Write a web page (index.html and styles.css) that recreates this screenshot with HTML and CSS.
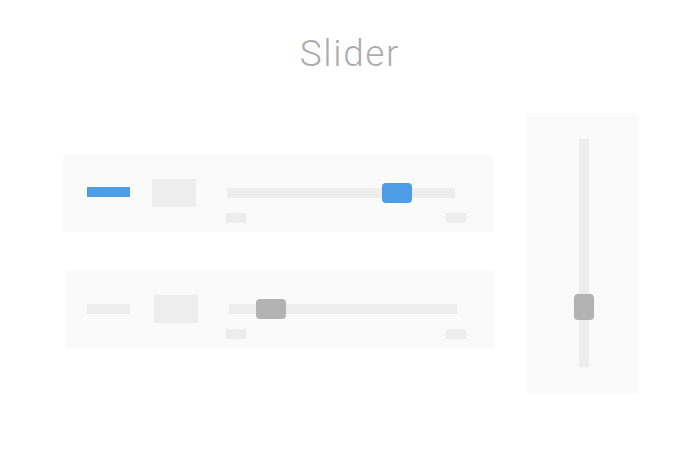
FILE: index.html
```
<!DOCTYPE html>
<html lang="en">
<head>
    <meta charset="UTF-8">
    <meta name="viewport" content="width=device-width, initial-scale=1.0">
    <title>Slider</title>
    <link rel="stylesheet" href="styles.css">
</head>
<body>
    <h1>Slider</h1>

    <div class="stage">
        <div class="rows">
            <!-- Active horizontal slider -->
            <div class="card">
                <span class="label active"></span>
                <span class="value"></span>
                <div class="slider">
                    <div class="track">
                        <span class="thumb active" style="left: 155px"></span>
                    </div>
                    <div class="ticks">
                        <span class="tick"></span>
                        <span class="tick"></span>
                    </div>
                </div>
            </div>

            <!-- Idle horizontal slider -->
            <div class="card card-idle">
                <span class="label"></span>
                <span class="value"></span>
                <div class="slider">
                    <div class="track">
                        <span class="thumb" style="left: 27px"></span>
                    </div>
                    <div class="ticks">
                        <span class="tick"></span>
                        <span class="tick"></span>
                    </div>
                </div>
            </div>
        </div>

        <!-- Vertical slider -->
        <div class="card-vertical">
            <div class="track-vertical">
                <span class="thumb-vertical" style="top: 155px"></span>
            </div>
        </div>
    </div>
</body>
</html>
```

FILE: styles.css
```
body {
    font-family: Roboto, "Liberation Sans", Arial, sans-serif;
    background-color: #fff;
    margin: 0;
    width: 700px;
    height: 460px;
    overflow: hidden;
}
h1 {
    margin: 36px 0 0;
    font-family: "Roboto Light", Roboto, "Liberation Sans", Arial, sans-serif;
    font-size: 37px;
    line-height: 36px;
    font-weight: 300;
    letter-spacing: 1.6px;
    color: #acacac;
    text-align: center;
}
.stage {
    display: flex;
    align-items: flex-start;
    gap: 32px;
    padding-left: 63px;
    margin-top: 41px;
}
.rows {
    width: 432px;
    margin-top: 41px;
    display: flex;
    flex-direction: column;
    gap: 38px;
}
.card {
    width: 430px;
    height: 78px;
    box-sizing: border-box;
    background-color: #fafafa;
    padding: 25px 0 0 24px;
    display: flex;
    align-items: flex-start;
}
.card-idle {
    margin-left: 2px;
    padding-left: 22px;
}
.label {
    width: 43px;
    height: 10px;
    margin-top: 8px;
    background-color: #ededed;
}
.card-idle .label {
    margin-top: 9px;
}
.label.active {
    background-color: #4d9de6;
}
.value {
    width: 44px;
    height: 28px;
    margin-left: 22px;
    background-color: #ededed;
}
.card-idle .value {
    margin-left: 24px;
}
.slider {
    margin-left: 31px;
    padding-top: 9px;
}
.track {
    position: relative;
    width: 228px;
    height: 10px;
    background-color: #ededed;
}
.thumb {
    position: absolute;
    top: -5px;
    width: 30px;
    height: 20px;
    border-radius: 4px;
    background-color: #b3b3b3;
}
.thumb.active {
    background-color: #4d9de6;
}
.ticks {
    width: 240px;
    margin: 15px 0 0 -1px;
    display: flex;
    justify-content: space-between;
}
.card-idle .ticks {
    margin-left: -3px;
}
.tick {
    width: 20px;
    height: 10px;
    background-color: #ededed;
}
.card-vertical {
    width: 112px;
    height: 281px;
    box-sizing: border-box;
    padding-top: 26px;
    background-color: #fafafa;
    display: flex;
    justify-content: center;
}
.track-vertical {
    position: relative;
    width: 10px;
    height: 228px;
    margin-left: 1px;
    background-color: #ededed;
}
.thumb-vertical {
    position: absolute;
    left: -5px;
    width: 20px;
    height: 26px;
    border-radius: 4px;
    background-color: #b3b3b3;
}
```
